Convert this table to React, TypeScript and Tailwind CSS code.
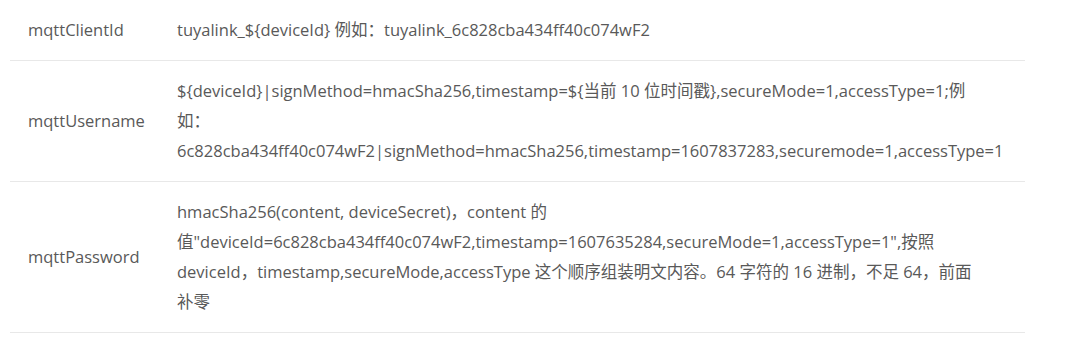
const rows: { key: string; value: React.ReactNode }[] = [
  {
    key: "mqttClientId",
    value: <>tuyalink_${"{deviceId}"} 例如：tuyalink_6c828cba434ff40c074wF2</>,
  },
  {
    key: "mqttUsername",
    value: (
      <>
        ${"{deviceId}"}|signMethod=hmacSha256,timestamp=${"{当前 10 位时间戳}"},secureMode=1,accessType=1;例
        <br />
        如：
        <br />
        6c828cba434ff40c074wF2|signMethod=hmacSha256,timestamp=1607837283,securemode=1,accessType=1
      </>
    ),
  },
  {
    key: "mqttPassword",
    value: (
      <>
        hmacSha256(content, deviceSecret)，content 的
        <br />
        值"deviceId=6c828cba434ff40c074wF2,timestamp=1607635284,secureMode=1,accessType=1",按照
        <br />
        deviceId，timestamp,secureMode,accessType 这个顺序组装明文内容。64 字符的 16 进制，不足 64，前面
        <br />
        补零
      </>
    ),
  },
];

export default function App() {
  return (
    <div className="min-h-[339px] bg-white pl-[10px] pr-[44px] font-['Open_Sans','Noto_Sans_CJK_SC',sans-serif] text-[16.5px] leading-[30px] text-[#595959]">
      <table className="w-full border-collapse">
        <tbody>
          {rows.map((r, i) => (
            <tr key={r.key} className={i === 0 ? "border-b border-[#e8e8e8]" : "border-t border-b border-[#e8e8e8]"}>
              <td className="w-[149px] py-[15px] pl-[18px] pr-2 align-middle whitespace-nowrap">{r.key}</td>
              <td className="py-[15px] pl-[18px] pr-[18px] align-middle whitespace-nowrap">{r.value}</td>
            </tr>
          ))}
        </tbody>
      </table>
    </div>
  );
}
